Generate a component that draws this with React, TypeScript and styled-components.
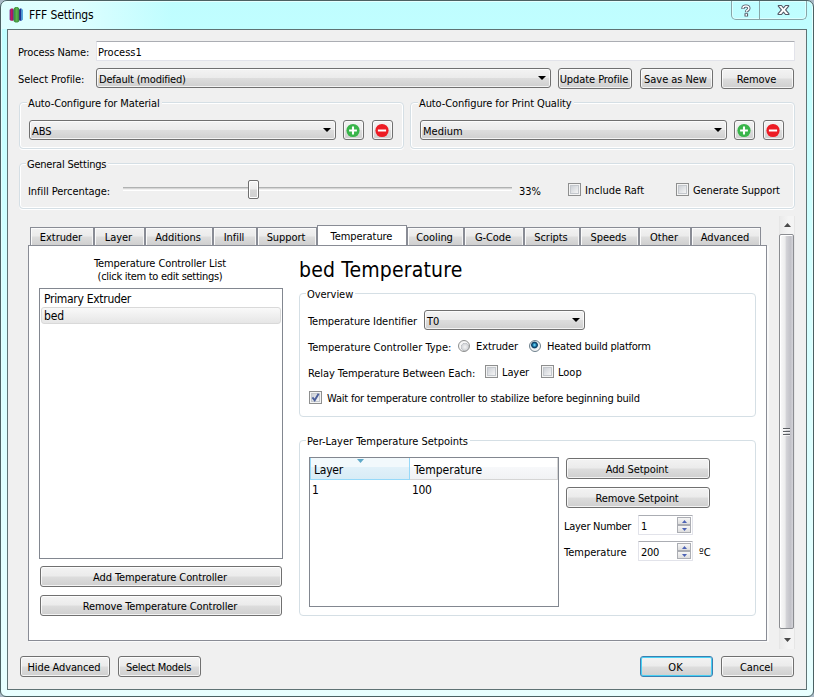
import React from "react";
import styled, { createGlobalStyle, css } from "styled-components";

const GlobalStyle = createGlobalStyle`
  * { box-sizing: border-box; }
  html, body { margin: 0; padding: 0; background: #a9b9c6; overflow: hidden; }
  body { font: 11px/16px "DejaVu Sans Condensed", "DejaVu Sans", sans-serif; color: #000; cursor: default; }
`;

type Space = { $ml?: number; $mt?: number };
const space = css<Space>`
  margin-left: ${(p) => p.$ml ?? 0}px;
  margin-top: ${(p) => p.$mt ?? 0}px;
`;

const Frame = styled.div`
  width: 814px;
  height: 697px;
  border: 1px solid #4b6163;
  border-radius: 7px 7px 6px 6px;
  background: linear-gradient(#bffdff 0, #c2ffff 60px, #d4ffff 280px, #e8ffff 100%);
  box-shadow: inset 0 0 0 1px #e4ffff;
  padding: 0 6px 6px;
  overflow: hidden;
`;

const TitleBar = styled.header`
  display: flex;
  height: 28px;
  margin-left: -5px;
  background: linear-gradient(90deg, rgba(235, 255, 255, 0.7) 0, rgba(235, 255, 255, 0.7) 70px, rgba(225, 255, 255, 0) 170px);
`;

const CaptionButtons = styled.div`
  display: flex;
  width: 76px;
  height: 19px;
  margin-left: auto;
  border: 1px solid #87a5a8;
  border-top: 0;
  border-radius: 0 0 5px 5px;
  box-shadow: inset 0 0 0 1px #dcffff;
`;

const CaptionButton = styled.div<{ $w: number; $divided?: boolean }>`
  width: ${(p) => p.$w}px;
  display: flex;
  justify-content: center;
  padding: 3px 0 0 2px;
  border-right: ${(p) => (p.$divided ? "1px solid #87a5a8" : "0")};
`;

const Body = styled.main`
  height: 661px;
  border: 1px solid #5f7274;
  background: #f0f0f0;
  display: flex;
  flex-direction: column;
`;

const Row = styled.div<Space & { $h?: number }>`
  display: flex;
  align-items: flex-start;
  flex: none;
  height: ${(p) => (p.$h ? `${p.$h}px` : "auto")};
  ${space}
`;

const Column = styled.div<Space & { $w?: number }>`
  display: flex;
  flex-direction: column;
  align-items: flex-start;
  flex: none;
  width: ${(p) => (p.$w ? `${p.$w}px` : "auto")};
  ${space}
`;

const Text = styled.span<Space & { $w?: number; $ls?: number; $size?: number }>`
  flex: none;
  width: ${(p) => (p.$w ? `${p.$w}px` : "auto")};
  font-size: ${(p) => p.$size ?? 11}px;
  line-height: ${(p) => (p.$size ? 14 : 16)}px;
  letter-spacing: ${(p) => p.$ls ?? 0}px;
  white-space: pre;
  ${space}
`;

const Heading = styled.h1`
  margin: 13px 0 0 0;
  font-size: 21px;
  font-weight: 400;
  line-height: 22px;
  letter-spacing: 0.17px;
  white-space: nowrap;
`;

const face = css`
  border: 1px solid #707070;
  border-radius: 3px;
  background: linear-gradient(#f3f3f3 0, #ebebeb 49%, #dddddd 51%, #cfcfcf 100%);
  box-shadow: inset 0 0 0 1px rgba(255, 255, 255, 0.75);
`;

const PushButton = styled.div<Space & { $w: number; $primary?: boolean; $ls?: number }>`
  ${face}
  flex: none;
  width: ${(p) => p.$w}px;
  height: 21px;
  padding: 3px 2px 0 0;
  text-align: center;
  white-space: nowrap;
  letter-spacing: ${(p) => p.$ls ?? 0}px;
  ${space}
  ${(p) =>
    p.$primary &&
    css`
      border-color: #3c7fb1;
      box-shadow: inset 0 0 0 1px #48d0f4;
    `}
`;

const IconButton = styled.div<Space>`
  ${face}
  flex: none;
  display: flex;
  align-items: center;
  justify-content: center;
  width: 21px;
  height: 20px;
  padding-right: 1px;
  ${space}
`;

const ComboBox = styled.div<Space & { $w: number }>`
  ${face}
  flex: none;
  display: flex;
  justify-content: space-between;
  width: ${(p) => p.$w}px;
  height: 20px;
  padding: 3px 4px 0 2px;
  ${space}
`;

const ComboArrow = styled.i`
  width: 0;
  height: 0;
  margin-top: 4px;
  border: 4px solid transparent;
  border-top-color: #000;
  border-bottom: 0;
`;

const TextField = styled.div<Space & { $w: number }>`
  flex: none;
  display: flex;
  width: ${(p) => p.$w}px;
  height: 20px;
  border: 1px solid #e2e3ea;
  border-top-color: #abadb3;
  border-radius: 1px;
  background: #fff;
  ${space}
`;

const GroupBox = styled.section<Space & { $w: number; $h: number }>`
  flex: none;
  width: ${(p) => p.$w}px;
  height: ${(p) => p.$h}px;
  border: 1px solid #d5dfe5;
  border-radius: 4px;
  box-shadow: inset 0 0 0 1px #fff, 0 1px 0 #fff;
  ${space}
`;

const Legend = styled.div<{ $ls?: number; $white?: boolean; $ml?: number }>`
  width: fit-content;
  height: 14px;
  margin: -7px 0 0 ${(p) => p.$ml ?? 6}px;
  padding: 0 2px 0 1px;
  background: ${(p) => (p.$white ? "#fff" : "#f0f0f0")};
  letter-spacing: ${(p) => p.$ls ?? 0}px;
  white-space: nowrap;
`;

const Slider = styled.div<Space>`
  display: flex;
  flex: none;
  width: 389px;
  height: 20px;
  ${space}
`;

const Track = styled.div<{ $w: number }>`
  width: ${(p) => p.$w}px;
  height: 4px;
  margin-top: 7px;
  border-top: 1px solid #b0b2b2;
  box-shadow: inset 0 1px 0 #d6d6d6, inset 0 -1px 0 #fff;
`;

const Thumb = styled.div`
  width: 11px;
  height: 19px;
  border: 1px solid #6f6f6f;
  border-radius: 2px;
  background: linear-gradient(#f5f5f5 0, #ececec 48%, #d6d6d6 52%, #d0d0d0 100%);
  box-shadow: inset 0 0 0 1px #fff;
`;

const CheckBox = styled.div<Space>`
  flex: none;
  display: flex;
  width: 13px;
  height: 13px;
  border: 1px solid #8e8f8f;
  background: linear-gradient(135deg, #cbcfd5 15%, #f6f6f6 85%);
  background-clip: content-box;
  padding: 2px;
  background-color: #fbfbfb;
  box-shadow: inset 0 0 0 1px #f4f4f4, inset 0 0 0 2px #c4c8cd;
  ${space}
  & svg { flex: none; margin: -1px 0 0 -1px; }
`;

const Radio = styled.div<Space & { $on?: boolean }>`
  flex: none;
  width: 12px;
  height: 12px;
  border: 1px solid ${(p) => (p.$on ? "#6d7f8c" : "#8e8f8f")};
  border-radius: 50%;
  background: ${(p) =>
    p.$on
      ? "radial-gradient(circle at 45% 40%, #8fe4fb 0, #2d9ccc 1.2px, #0b3f66 2.6px, #14486d 3px, #dfe8ee 3.8px, #f4f4f4 5px)"
      : "radial-gradient(circle at 60% 60%, #f4f4f4 0, #d4d6d9 3.2px, #bfc2c6 3.8px, #f6f6f6 4.4px)"};
  ${space}
`;

const Tabs = styled.nav`
  display: flex;
  align-items: flex-end;
  height: 20px;
  margin: 0 0 0 2px;
`;

const Tab = styled.div<{ $w: number; $active?: boolean }>`
  flex: none;
  width: ${(p) => p.$w}px;
  height: 18px;
  border: 1px solid #898c95;
  border-bottom: 0;
  background: linear-gradient(#f2f2f2 0, #ebebeb 48%, #dddddd 52%, #cfcfcf 100%);
  box-shadow: inset 1px 1px 0 #fbfbfb, inset -1px 0 0 #f4f4f4;
  padding: 2px 2px 0 0;
  text-align: center;
  letter-spacing: -0.06px;
  white-space: nowrap;
  ${(p) =>
    p.$active &&
    css`
      height: 21px;
      margin-bottom: -1px;
      padding: 3px 1px 0 0;
      background: #fff;
      box-shadow: none;
    `}
`;

const TabPanel = styled.section`
  display: flex;
  align-items: flex-start;
  width: 739px;
  height: 396px;
  border: 1px solid #898c95;
  background: #fff;
  box-shadow: 1px 1px 0 #fafafa, 2px 1px 0 #f8f8f8;
`;

const Caption = styled.div`
  width: 244px;
  margin-top: 11px;
  padding-right: 2px;
  text-align: center;
  line-height: 13px;
`;

const Spaced = styled.div<{ $ls: number }>`
  letter-spacing: ${(p) => p.$ls}px;
`;

const ListBox = styled.div`
  width: 244px;
  height: 271px;
  margin: 5px 0 7px;
  padding: 1px;
  border: 1px solid #828790;
  font-size: 12px;
`;

const ListItem = styled.div<{ $selected?: boolean; $ls?: number }>`
  height: 17px;
  padding: 1px 0 0 2px;
  border: 1px solid ${(p) => (p.$selected ? "#d9d9d9" : "transparent")};
  border-radius: 3px;
  background: ${(p) => (p.$selected ? "linear-gradient(#f9f9f9, #e6e6e6)" : "none")};
  line-height: 14px;
  letter-spacing: ${(p) => p.$ls ?? 0}px;
`;

const Table = styled.div`
  flex: none;
  width: 250px;
  height: 150px;
  margin: 9px 0 0 9px;
  border: 1px solid #828790;
`;

const HeaderRow = styled.div`
  display: flex;
  height: 22px;
`;

const HeaderCell = styled.div<{ $w: number; $sorted?: boolean }>`
  width: ${(p) => p.$w}px;
  height: 22px;
  padding: 5px 0 0 ${(p) => (p.$sorted ? 3 : 4)}px;
  font-size: 12px;
  line-height: 14px;
  letter-spacing: ${(p) => (p.$sorted ? -0.25 : 0)}px;
  border: 1px solid ${(p) => (p.$sorted ? "#96d9f9" : "#d5d5d5")};
  border-width: ${(p) => (p.$sorted ? "0 1px 1px 1px" : "0 1px 1px 0")};
  background: ${(p) =>
    p.$sorted
      ? "linear-gradient(#f2f9fc 0, #f2f9fc 43%, #e1f1f9 44%, #d8ecf6 100%)"
      : "linear-gradient(#fff 0, #fff 43%, #f7f8fa 44%, #f1f2f4 100%)"};
  position: relative;
`;

const SortArrow = styled.svg`
  position: absolute;
  left: 46px;
  top: 1px;
`;

const DataRow = styled.div`
  display: flex;
  font-size: 12px;
  line-height: 14px;
  padding: 3px 0 0 2px;
`;

const Cell = styled.span<{ $w: number }>`
  width: ${(p) => p.$w}px;
  letter-spacing: -0.4px;
`;

const SpinButtons = styled.div`
  display: flex;
  flex-direction: column;
  width: 14px;
  margin: 1px 1px 0 auto;
`;

const SpinButton = styled.div`
  display: flex;
  align-items: center;
  justify-content: center;
  height: 8px;
  border: 1px solid #abadb3;
  background: linear-gradient(#f6f6f6, #dedede);
`;

const ScrollBar = styled.div`
  flex: none;
  display: flex;
  flex-direction: column;
  align-items: center;
  width: 16px;
  height: 433px;
  margin: -9px 0 0 12px;
  border: solid #e6e6e6;
  border-width: 0 1px;
  background: linear-gradient(90deg, #eaeaea, #f4f4f4 60%);
`;

const ScrollThumb = styled.div`
  align-self: flex-start;
  display: flex;
  align-items: center;
  justify-content: center;
  width: 15px;
  height: 395px;
  margin-left: -1px;
  padding-right: 1px;
  border: 1px solid #8b8d91;
  border-radius: 2px;
  background: linear-gradient(90deg, #fafafa 0, #ededed 38%, #d2d2d6 50%, #c2c2c8 80%, #d3d3d8 100%);
  box-shadow: inset 1px 1px 0 #fff;
`;

const ScrollArrow = styled.div<{ $h: number; $pt: number }>`
  height: ${(p) => p.$h}px;
  padding-top: ${(p) => p.$pt}px;
  line-height: 0;
`;

const AppIcon = () => (
  <svg width="16" height="18" viewBox="0 0 16 18">
    <path d="M.6 3.700 2 2.800v12L.6 13.800z" fill="#7d2a8c" />
    <path d="M1.800 2.600h2.300v12.200H1.800z" fill="#c2185b" />
    <path d="M3.700 3.200h1.100v11.200H3.700z" fill="#46307c" />
    <path d="M9.900 3.200h1.300v11.200H9.900z" fill="#3d1d8c" />
    <path d="M11 2.600h1.500v12.200H11z" fill="#1b2f93" />
    <path d="M12.400 2.800l1.400.9v10.100l-1.400 1z" fill="#2f8fd0" />
    <path d="M4.800 2.200 6.400 1h2.200l1.600 1.200v13.200l-1.600 1.200H6.400l-1.600-1.200z" fill="#3f9440" />
    <path d="M6.600 1.600h2v14h-2z" fill="#5fb04c" />
  </svg>
);

const PlusIcon = () => (
  <svg width="15" height="15" viewBox="0 0 15 15">
    <circle cx="7" cy="7.5" r="6.600" fill="#39b54a" />
    <path d="M7 3.600v7.800M3.100 7.500h7.800" stroke="#fff" strokeWidth="2.1" />
  </svg>
);

const MinusIcon = () => (
  <svg width="15" height="15" viewBox="0 0 15 15">
    <circle cx="7" cy="7.500" r="6.600" fill="#ed1c24" />
    <path d="M2.900 7.500h8.200" stroke="#fff" strokeWidth="2.2" />
  </svg>
);

const HelpIcon = () => (
  <svg width="12" height="14" viewBox="0 0 12 14">
    <path d="M3 5V3.900C3 2.600 4.200 2 5.900 2s3 .8 3 2.200c0 2-2.500 2-2.500 4" fill="none" stroke="#545a68" strokeWidth="3.200" />
    <path d="M4.500 9.200h3.600v3.300H4.500z" fill="#545a68" />
    <path d="M3 4.500V3.900C3 2.600 4.200 2 5.900 2s3 .8 3 2.200c0 2-2.500 2-2.500 3.500M6.300 9.900v1.900" fill="none" stroke="#fff" strokeWidth="1.500" />
  </svg>
);

const CloseIcon = () => (
  <svg width="13" height="12" viewBox="0 0 13 12">
    <path
      d="M1.300 1.500h3.200l2 2.300 2-2.300h3.200v.7L8.600 5.800l3.300 3.900v.8H8.500l-2-2.400-2 2.400H1.100v-.8l3.300-3.900-3.100-3.600z"
      fill="#fff"
      stroke="#545a68"
      strokeWidth="1.100"
      strokeLinejoin="round"
    />
  </svg>
);

const CheckMark = () => (
  <svg width="9" height="9" viewBox="0 0 9 9">
    <path d="M1.400 4.300 3.700 7.300 7.600.8" fill="none" stroke="#4b5f9b" strokeWidth="1.900" />
  </svg>
);

const Triangle = ({ up, w, h, color }: { up?: boolean; w: number; h: number; color: string }) => (
  <svg width={w} height={h} viewBox={`0 0 ${w} ${h}`}>
    <path d={up ? `M0 ${h}L${w / 2} 0L${w} ${h}z` : `M0 0H${w}L${w / 2} ${h}z`} fill={color} />
  </svg>
);

const Grip = () => (
  <svg width="7" height="9" viewBox="0 0 7 9">
    <path d="M0 1.500h7M0 4.500h7M0 7.500h7" stroke="#5c5f63" />
    <path d="M0 2.500h7M0 5.500h7M0 8.500h7" stroke="#fff" opacity=".7" />
  </svg>
);

const Combo = ({ w, ml, mt, ls, children }: { w: number; ml?: number; mt?: number; ls?: number; children: string }) => (
  <ComboBox $w={w} $ml={ml} $mt={mt}>
    <Text $ls={ls}>{children}</Text>
    <ComboArrow />
  </ComboBox>
);

const Spin = ({ value }: { value: string }) => (
  <TextField $w={55}>
    <Text $ml={2} $mt={3} $ls={-0.3}>{value}</Text>
    <SpinButtons>
      <SpinButton><Triangle up w={5} h={3} color="#4d63b5" /></SpinButton>
      <SpinButton><Triangle w={5} h={3} color="#4d63b5" /></SpinButton>
    </SpinButtons>
  </TextField>
);

const tabs: { label: string; w: number; active?: boolean }[] = [
  { label: "Extruder", w: 64 },
  { label: "Layer", w: 51 },
  { label: "Additions", w: 68 },
  { label: "Infill", w: 44 },
  { label: "Support", w: 60 },
  { label: "Temperature", w: 90, active: true },
  { label: "Cooling", w: 57 },
  { label: "G-Code", w: 60 },
  { label: "Scripts", w: 56 },
  { label: "Speeds", w: 59 },
  { label: "Other", w: 52 },
  { label: "Advanced", w: 70 },
];

export default function App() {
  return (
    <>
      <GlobalStyle />
      <Frame>
        <TitleBar>
          <Row $ml={7} $mt={5}><AppIcon /></Row>
          <Text $ml={4} $mt={7} $size={12} $ls={-0.15}>FFF Settings</Text>
          <CaptionButtons>
            <CaptionButton $w={28} $divided><HelpIcon /></CaptionButton>
            <CaptionButton $w={47}><CloseIcon /></CaptionButton>
          </CaptionButtons>
        </TitleBar>
        <Body>
          <Row $mt={11} $ml={10} $h={20}>
            <Text $w={78} $mt={4} $ls={-0.15}>Process Name:</Text>
            <TextField $w={699}><Text $ml={1} $mt={3}>Process1</Text></TextField>
          </Row>
          <Row $mt={7} $ml={10} $h={21}>
            <Text $w={78} $mt={4} $ls={-0.1}>Select Profile:</Text>
            <Combo w={455} ls={-0.2}>Default (modified)</Combo>
            <PushButton $w={74} $ml={7} $ls={-0.08}>Update Profile</PushButton>
            <PushButton $w={73} $ml={8} $ls={-0.05}>Save as New</PushButton>
            <PushButton $w={73} $ml={8} $ls={-0.1}>Remove</PushButton>
          </Row>

          <Row $mt={13} $ml={11} $h={47}>
            <GroupBox $w={385} $h={47}>
              <Legend $ls={-0.12} $ml={7}>Auto-Configure for Material</Legend>
              <Row $ml={9} $mt={10}>
                <Combo w={307}>ABS</Combo>
                <IconButton $ml={7}><PlusIcon /></IconButton>
                <IconButton $ml={8}><MinusIcon /></IconButton>
              </Row>
            </GroupBox>
            <GroupBox $w={385} $h={47} $ml={6}>
              <Legend $ls={-0.1} $ml={7}>Auto-Configure for Print Quality</Legend>
              <Row $ml={9} $mt={10}>
                <Combo w={307}>Medium</Combo>
                <IconButton $ml={7}><PlusIcon /></IconButton>
                <IconButton $ml={8}><MinusIcon /></IconButton>
              </Row>
            </GroupBox>
          </Row>

          <GroupBox $w={776} $h={46} $mt={14} $ml={11}>
            <Legend $ls={-0.22}>General Settings</Legend>
            <Row $ml={8} $mt={9}>
              <Text $w={95} $mt={4} $ls={-0.05}>Infill Percentage:</Text>
              <Slider>
                <Track $w={125} />
                <Thumb />
                <Track $w={253} />
              </Slider>
              <Text $w={49} $ml={7} $mt={4}>33%</Text>
              <CheckBox $mt={3} />
              <Text $w={91} $ml={4} $mt={3}>Include Raft</Text>
              <CheckBox $mt={3} />
              <Text $ml={4} $mt={3} $ls={-0.1}>Generate Support</Text>
            </Row>
          </GroupBox>

          <Row $mt={16} $ml={20} $h={416}>
            <Column>
              <Tabs>
                {tabs.map((t) => (
                  <Tab key={t.label} $w={t.w} $active={t.active}>{t.label}</Tab>
                ))}
              </Tabs>
              <TabPanel>
                <Column $ml={10} $w={244}>
                  <Caption>
                    <Spaced $ls={-0.1}>Temperature Controller List</Spaced>
                    <Spaced $ls={-0.29}>(click item to edit settings)</Spaced>
                  </Caption>
                  <ListBox>
                    <ListItem $ls={-0.3}>Primary Extruder</ListItem>
                    <ListItem $selected $ls={-0.1}>bed</ListItem>
                  </ListBox>
                  <PushButton $w={242} $ml={1} $ls={-0.1}>Add Temperature Controller</PushButton>
                  <PushButton $w={242} $ml={1} $mt={8} $ls={-0.1}>Remove Temperature Controller</PushButton>
                </Column>

                <Column $ml={16} $w={457}>
                  <Heading>bed Temperature</Heading>
                  <GroupBox $w={457} $h={124} $mt={12}>
                    <Legend $white $ls={-0.05}>Overview</Legend>
                    <Row $ml={8} $mt={9} $h={20}>
                      <Text $mt={4} $w={116} $ls={-0.05}>Temperature Identifier</Text>
                      <Combo w={161}>T0</Combo>
                    </Row>
                    <Row $ml={8} $mt={10} $h={16}>
                      <Text $w={150}>Temperature Controller Type:</Text>
                      <Radio />
                      <Text $w={53} $ml={6} $mt={-1} $ls={-0.1}>Extruder</Text>
                      <Radio $on />
                      <Text $ml={6} $mt={-1} $ls={-0.23}>Heated build platform</Text>
                    </Row>
                    <Row $ml={8} $mt={9} $h={16}>
                      <Text $w={177} $mt={1} $ls={-0.08}>Relay Temperature Between Each:</Text>
                      <CheckBox />
                      <Text $w={39} $ml={4} $ls={-0.1}>Layer</Text>
                      <CheckBox />
                      <Text $ml={4}>Loop</Text>
                    </Row>
                    <Row $ml={9} $mt={10} $h={16}>
                      <CheckBox><CheckMark /></CheckBox>
                      <Text $ml={5} $ls={-0.2}>Wait for temperature controller to stabilize before beginning build</Text>
                    </Row>
                  </GroupBox>

                  <GroupBox $w={457} $h={176} $mt={23}>
                    <Legend $white $ls={-0.02}>Per-Layer Temperature Setpoints</Legend>
                    <Row>
                      <Table>
                        <HeaderRow>
                          <HeaderCell $w={100} $sorted>
                            <SortArrow width="7" height="4" viewBox="0 0 7 4">
                              <path d="M0 0h7L3.500 4z" fill="#5fa9c8" />
                            </SortArrow>
                            Layer
                          </HeaderCell>
                          <HeaderCell $w={148}>Temperature</HeaderCell>
                        </HeaderRow>
                        <DataRow>
                          <Cell $w={100}>1</Cell>
                          <Cell $w={100}>100</Cell>
                        </DataRow>
                      </Table>
                      <Column $ml={7} $mt={10}>
                        <PushButton $w={144} $ls={-0.1}>Add Setpoint</PushButton>
                        <PushButton $w={144} $mt={8} $ls={-0.1}>Remove Setpoint</PushButton>
                        <Row $mt={7} $ml={-2} $h={20}>
                          <Text $w={74} $mt={4} $ls={-0.28}>Layer Number</Text>
                          <Spin value="1" />
                        </Row>
                        <Row $mt={6} $ml={-2} $h={20}>
                          <Text $w={74} $mt={4}>Temperature</Text>
                          <Spin value="200" />
                          <Text $ml={6} $mt={4}>ºC</Text>
                        </Row>
                      </Column>
                    </Row>
                  </GroupBox>
                </Column>
              </TabPanel>
            </Column>
            <ScrollBar>
              <ScrollArrow $h={18} $pt={7}><Triangle up w={7} h={4} color="#4a4a4a" /></ScrollArrow>
              <ScrollThumb><Grip /></ScrollThumb>
              <ScrollArrow $h={18} $pt={9}><Triangle w={7} h={4} color="#4a4a4a" /></ScrollArrow>
            </ScrollBar>
          </Row>

          <Row $mt={15} $ml={12} $h={21}>
            <PushButton $w={90} $ls={-0.13}>Hide Advanced</PushButton>
            <PushButton $w={83} $ml={8} $ls={-0.26}>Select Models</PushButton>
            <PushButton $w={73} $ml={439} $primary>OK</PushButton>
            <PushButton $w={73} $ml={8} $ls={-0.1}>Cancel</PushButton>
          </Row>
        </Body>
      </Frame>
    </>
  );
}
